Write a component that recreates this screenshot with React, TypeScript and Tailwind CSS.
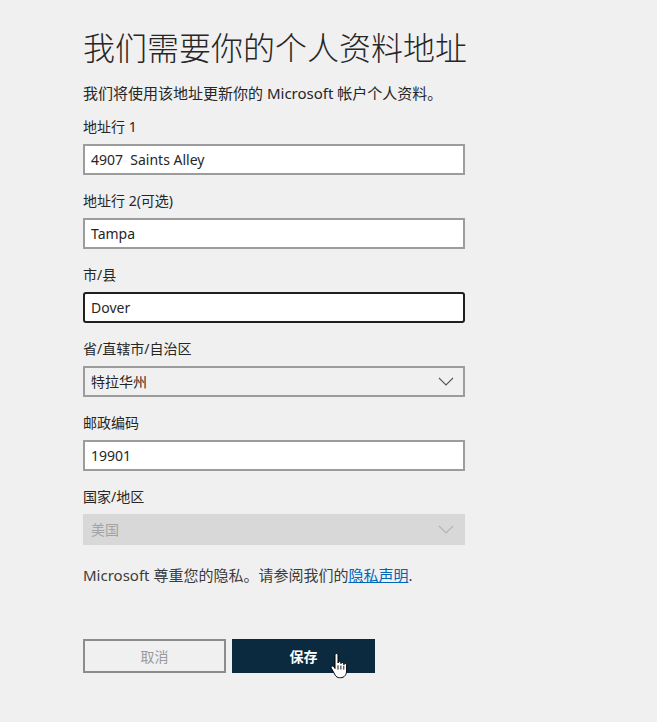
import type { ReactNode } from 'react'

const FONT = '"Noto Sans", "Noto Sans CJK SC", sans-serif'

function Chevron({ muted }: { muted?: boolean }) {
  return (
    <svg width="16" height="9" viewBox="0 0 16 9" fill="none" className="shrink-0">
      <path d="M1 1l7 7 7-7" stroke={muted ? '#b3b3b3' : '#555'} strokeWidth="1.1" />
    </svg>
  )
}

function Field({ label, children }: { label: string; children: ReactNode }) {
  return (
    <div className="flex flex-col">
      <label className="h-5 text-[14px] leading-5 text-[#262626]">{label}</label>
      <div className="mt-[7px] mb-4">{children}</div>
    </div>
  )
}

function TextBox({ value, focused }: { value: string; focused?: boolean }) {
  return (
    <div
      className={
        focused
          ? 'flex h-[31px] items-center rounded-[3px] border-2 border-[#1f1f1f] bg-white px-[6px] text-[14px] text-[#262626]'
          : 'flex h-[31px] items-center border-2 border-[#9c9c9c] bg-white px-[6px] text-[14px] text-[#262626]'
      }
    >
      <span className="whitespace-pre">{value}</span>
    </div>
  )
}

function Select({ value, disabled }: { value: string; disabled?: boolean }) {
  return (
    <div
      className={
        disabled
          ? 'flex h-[31px] items-center justify-between bg-[#d8d8d8] pl-2 pr-[11px] text-[14px] text-[#a3a3a3]'
          : 'flex h-[31px] items-center justify-between border-2 border-[#9c9c9c] bg-[#f0f0f0] pl-[6px] pr-[9px] text-[14px] text-[#262626]'
      }
    >
      <span>{value}</span>
      <Chevron muted={disabled} />
    </div>
  )
}

function HandCursor() {
  return (
    <svg width="20" height="26" viewBox="0 0 20 26" className="absolute left-[98px] top-[14px]">
      <path
        d="M5 2.2c0-1 .7-1.7 1.5-1.7S8 1.2 8 2.2V10c.2-.9.8-1.4 1.5-1.4s1.4.6 1.4 1.5v.6c.2-.8.8-1.2 1.5-1.2s1.4.6 1.4 1.4v.8c.2-.7.8-1.1 1.4-1.1.8 0 1.4.6 1.4 1.5v5.6c0 3.8-2.2 7-6 7H9.6c-2 0-3.3-.9-4.4-2.5L1.4 15.3c-.5-.8-.3-1.7.4-2.1.7-.4 1.5-.2 2 .5L5 15.5z"
        fill="#fff"
        stroke="#000"
        strokeWidth="1"
        strokeLinejoin="round"
      />
      <path d="M10.9 12.5v4M13.8 12.8v3.8M8 12.3v4.3" stroke="#000" strokeWidth="0.9" />
    </svg>
  )
}

export default function App() {
  return (
    <div className="min-h-[722px] w-full bg-[#f0f0f0]" style={{ fontFamily: FONT }}>
      <div className="ml-[83px] w-[382px] pt-[26px]">
        <h1 className="h-[44px] whitespace-nowrap text-[32px] font-light leading-[44px] text-[#262626]">
          我们需要你的个人资料地址
        </h1>
        <p className="mt-[13px] h-5 whitespace-nowrap text-[15px] leading-5 text-[#262626]">
          我们将使用该地址更新你的 Microsoft 帐户个人资料。
        </p>

        <div className="mt-[14px] flex flex-col">
          <Field label="地址行 1">
            <TextBox value="4907  Saints Alley" />
          </Field>
          <Field label="地址行 2(可选)">
            <TextBox value="Tampa" />
          </Field>
          <Field label="市/县">
            <TextBox value="Dover" focused />
          </Field>
          <Field label="省/直辖市/自治区">
            <Select value="特拉华州" />
          </Field>
          <Field label="邮政编码">
            <TextBox value="19901" />
          </Field>
          <Field label="国家/地区">
            <Select value="美国" disabled />
          </Field>
        </div>

        <p className="mt-1 h-5 whitespace-nowrap text-[15px] leading-5 text-[#3b3b3b]">
          Microsoft 尊重您的隐私。请参阅我们的
          <a className="text-[#0067b8] underline">隐私声明</a>.
        </p>

        <div className="mt-[54px] flex gap-[6px]">
          <button className="h-[34px] w-[143px] border-2 border-[#8c8c8c] bg-[#f0f0f0] text-[14px] text-[#9a9a9a]">
            取消
          </button>
          <div className="relative">
            <button className="h-[34px] w-[143px] bg-[#0b2a40] text-[14px] font-semibold text-white">保存</button>
            <HandCursor />
          </div>
        </div>
      </div>
    </div>
  )
}
